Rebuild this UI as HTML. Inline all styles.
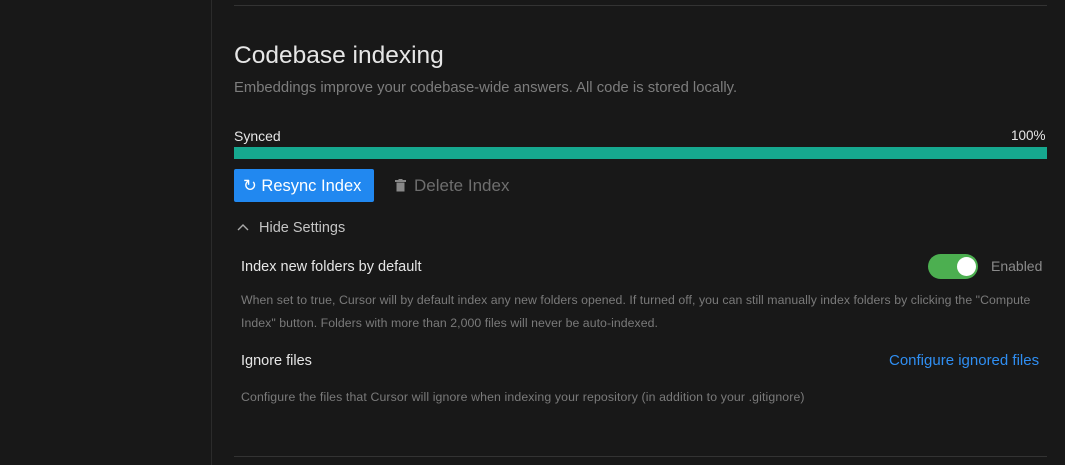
<!DOCTYPE html>
<html><head><style>
body{margin:0;width:1065px;height:465px;background:#181818;font-family:"Liberation Sans",sans-serif;position:relative;overflow:hidden}
.a{position:absolute;white-space:nowrap}
</style></head><body>
<div class="a" style="left:211px;top:0;width:1px;height:465px;background:#2b2b2b"></div>
<div class="a" style="left:234px;top:5px;width:813px;height:1px;background:#333"></div>
<div class="a" style="left:234px;top:456px;width:813px;height:1px;background:#333"></div>
<div class="a" style="left:234px;top:42px;font-size:24.5px;color:#e6e6e6">Codebase indexing</div>
<div class="a" style="left:234px;top:80px;font-size:14.8px;color:#7d7d7d">Embeddings improve your codebase-wide answers. All code is stored locally.</div>
<div class="a" style="left:234px;top:128px;font-size:14px;color:#e6e6e6">Synced</div>
<div class="a" style="left:1011px;top:128px;font-size:13.5px;color:#e6e6e6">100%</div>
<div class="a" style="left:234px;top:147px;width:813px;height:12px;background:#16a88f"></div>
<div class="a" style="left:234px;top:169px;width:140px;height:33px;background:#2188f0;border-radius:2px;color:#fff;font-size:16.5px;line-height:34px;text-indent:9px">↻ Resync Index</div>
<svg class="a" style="left:395px;top:179px" width="11" height="13" viewBox="0 0 11 13"><rect x="0" y="1" width="11" height="2" fill="#888"/><rect x="3.5" y="0" width="4" height="2" fill="#888"/><rect x="1.5" y="3.5" width="8" height="9" fill="#888"/></svg>
<div class="a" style="left:414px;top:176px;font-size:17px;color:#6e6e6e">Delete Index</div>
<svg class="a" style="left:237px;top:223px" width="12" height="8" viewBox="0 0 12 8"><path d="M1 7L6 2L11 7" stroke="#aaa" stroke-width="1.4" fill="none"/></svg>
<div class="a" style="left:259px;top:220px;font-size:14.5px;color:#c4c4c4">Hide Settings</div>
<div class="a" style="left:241px;top:259px;font-size:14.5px;color:#e6e6e6">Index new folders by default</div>
<div class="a" style="left:928px;top:254px;width:50px;height:25px;border-radius:13px;background:#4caf50"></div>
<div class="a" style="left:957px;top:257px;width:19px;height:19px;border-radius:50%;background:#fff"></div>
<div class="a" style="left:991px;top:258px;font-size:14px;color:#8a8a8a">Enabled</div>
<div class="a" style="left:241px;top:289px;font-size:12.3px;color:#7a7a7a;line-height:23px;white-space:normal;width:805px;letter-spacing:0.05px">When set to true, Cursor will by default index any new folders opened. If turned off, you can still manually index folders by clicking the "Compute Index" button. Folders with more than 2,000 files will never be auto-indexed.</div>
<div class="a" style="left:241px;top:353px;font-size:14.5px;color:#e6e6e6">Ignore files</div>
<div class="a" style="left:889px;top:352px;font-size:15px;color:#2f8ef2">Configure ignored files</div>
<div class="a" style="left:241px;top:390px;font-size:12.3px;color:#7a7a7a;letter-spacing:0.12px">Configure the files that Cursor will ignore when indexing your repository (in addition to your .gitignore)</div>
</body></html>
